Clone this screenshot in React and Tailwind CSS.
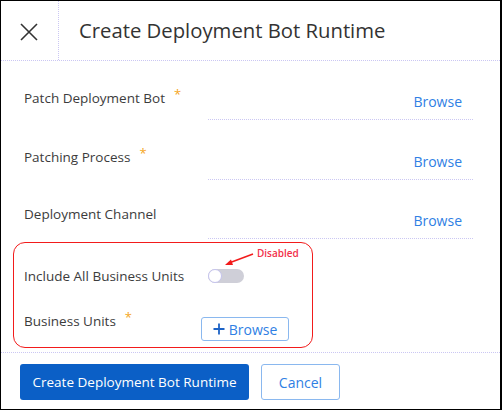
const font = { fontFamily: '"Open Sans", "Liberation Sans", sans-serif' };

function Star() {
  return <span className="ml-[9px] relative -top-[4px] text-[13px] text-[#f5a623]">*</span>;
}

function BrowseRow({ label, required, labelTop }) {
  return (
    <div className="flex items-start">
      <div className={`w-[184px] text-[13.5px] leading-[20px] text-[#3c3c3c] ${labelTop}`}>
        {label}
        {required ? <Star /> : null}
      </div>
      <div className="flex h-[37px] w-[265px] items-end justify-end border-b border-dotted border-[#cbc7f3] pr-[11px] pb-[7px]">
        <span className="text-[14px] leading-[20px] text-[#2f80e4]">Browse</span>
      </div>
    </div>
  );
}

export default function App() {
  return (
    <div
      style={font}
      className="flex h-[410px] w-[502px] flex-col border border-r-2 border-black bg-white"
    >
      <header className="flex h-[60px] shrink-0 items-center border-b border-dotted border-[#cbc7f3]">
        <div className="flex h-full w-[58px] items-center justify-center border-r border-dotted border-[#cbc7f3]">
          <svg width="18" height="18" viewBox="0 0 18 18" className="ml-[-1px] mt-[2px]">
            <path d="M1 1 L17 17 M17 1 L1 17" stroke="#333" strokeWidth="1.6" />
          </svg>
        </div>
        <h1 className="pl-[20px] text-[20.3px] font-normal text-[#333]">
          Create Deployment Bot Runtime
        </h1>
      </header>

      <div className="flex flex-col pl-[23px] pt-[22px]">
        <BrowseRow label="Patch Deployment Bot" required labelTop="mt-[5px]" />
        <div className="h-[23px]" />
        <BrowseRow label="Patching Process" required labelTop="mt-[4px]" />
        <div className="h-[22px]" />
        <BrowseRow label="Deployment Channel" labelTop="mt-[2px]" />
      </div>

      <div className="relative ml-[12px] mt-[3px] h-[106px] w-[300px] rounded-[12px] border-[1.5px] border-[#f21b1b] pl-[10px]">
        <div className="flex h-[64px] items-center pt-[1px]">
          <span className="w-[184px] text-[13.5px] leading-[20px] text-[#3c3c3c]">
            Include All Business Units
          </span>
          <div className="relative h-[14px] w-[36px] rounded-full bg-[#cfcfd8]">
            <div className="absolute left-0 top-0 h-[14px] w-[14px] rounded-full border border-[#c5c3ee] bg-white" />
          </div>
        </div>
        <div className="flex items-start">
          <span className="mt-[4px] w-[177px] text-[13.5px] leading-[20px] text-[#3c3c3c]">
            Business Units
            <Star />
          </span>
          <button className="mt-[10px] flex h-[24px] w-[88px] items-center justify-center gap-[4px] rounded-[3px] border border-[#8ab8ef] text-[14px] text-[#2f80e4]">
            <svg width="12" height="12" viewBox="0 0 12 12">
              <path d="M6 0.5 V11.5 M0.5 6 H11.5" stroke="#1d63c6" strokeWidth="1.8" />
            </svg>
            Browse
          </button>
        </div>
        <svg width="32" height="16" viewBox="0 0 32 16" className="absolute left-[209px] top-[8px]">
          <path d="M30 3 L6 12" stroke="#f21b1b" strokeWidth="1.5" />
          <path d="M2 14 L8 8.5 L10 14 Z" fill="#f21b1b" />
        </svg>
        <span className="absolute left-[243px] top-[4px] text-[10px] font-semibold leading-[12px] text-[#f2304a]">
          Disabled
        </span>
      </div>

      <div className="mt-[4px] flex items-center gap-[12px] border-t border-dotted border-[#cbc7f3] pl-[19px] pt-[11px]">
        <button className="h-[36px] w-[229px] rounded-[3px] bg-[#0b5fc6] text-[13.5px] text-white">
          Create Deployment Bot Runtime
        </button>
        <button className="h-[36px] w-[79px] rounded-[3px] border border-[#8ab8ef] text-[14px] text-[#2f80e4]">
          Cancel
        </button>
      </div>
    </div>
  );
}
